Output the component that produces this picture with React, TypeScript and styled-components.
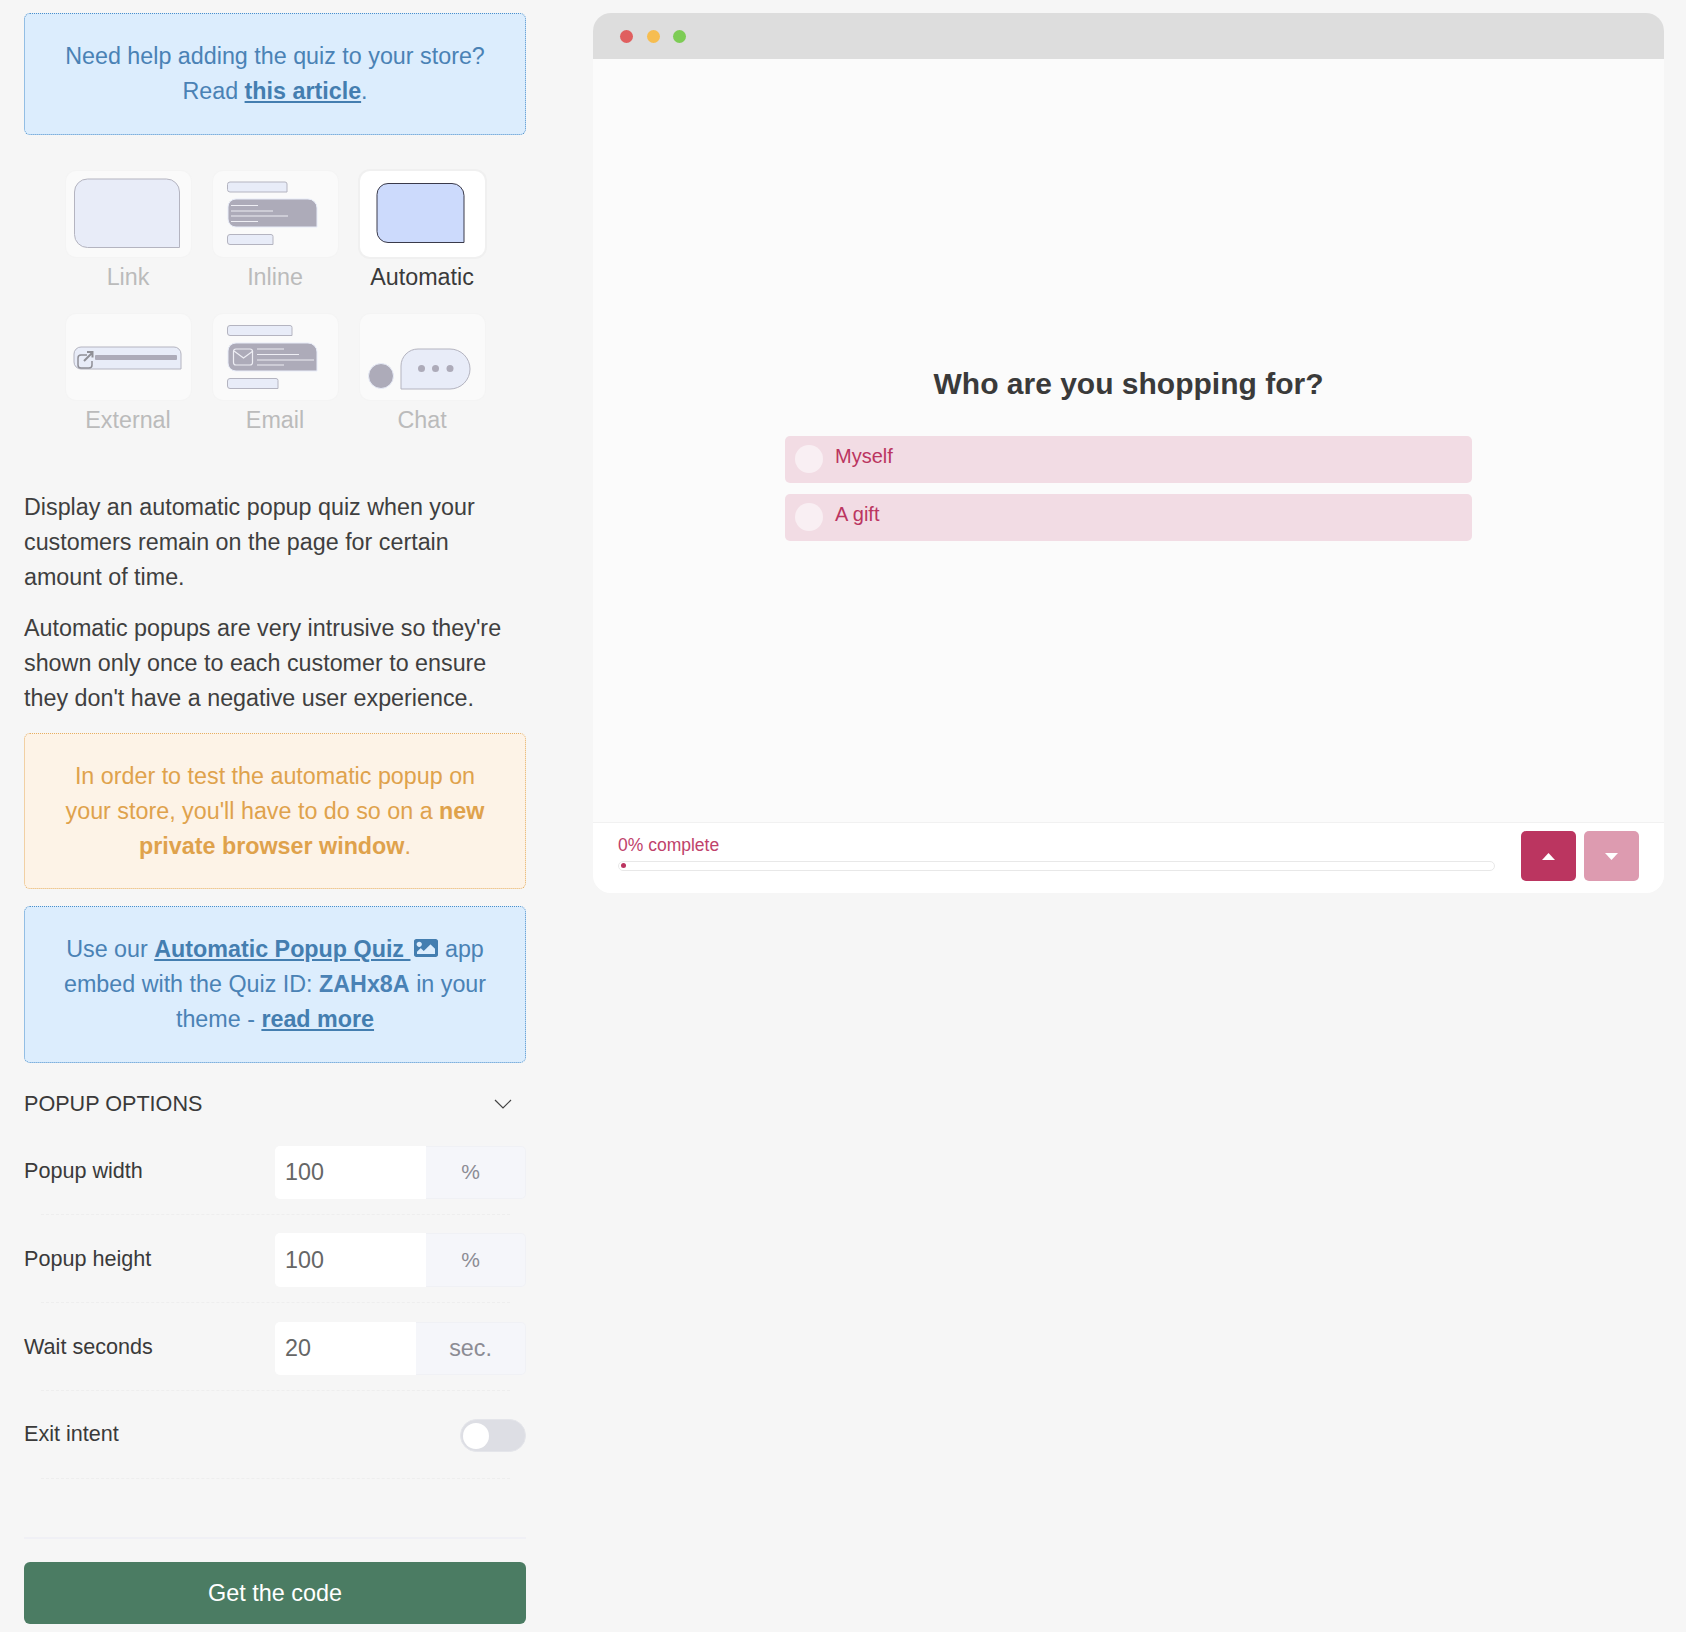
import styled, { createGlobalStyle } from "styled-components";
import { FaImage } from "react-icons/fa";

const GlobalStyle = createGlobalStyle`
    html, body {
        margin: 0;
        padding: 0;
        background: #f6f6f6;
    }

    * {
        box-sizing: border-box;
    }
`

const Page = styled.div`
    width: 1686px;
    height: 1632px;
    padding: 13px 22px 0 24px;
    display: flex;
    gap: 67px;
    align-items: flex-start;
    font-family: "Liberation Sans", Arial, sans-serif;
    color: #3a3a3a;
    overflow: hidden;
`

const Sidebar = styled.div`
    width: 502px;
    flex-shrink: 0;
`

const Notice = styled.div<{ $tone: "info" | "warn"; $top?: number; $pad?: number }>`
    margin-top: ${props => props.$top ?? 0}px;
    padding: ${props => props.$pad ?? 24.5}px 30px;
    border-radius: 6px;
    border: 1px dotted ${props => props.$tone === "info" ? "#4a8fcb" : "#e6ae62"};
    background: ${props => props.$tone === "info" ? "#dcedfd" : "#fdf3e7"};
    color: ${props => props.$tone === "info" ? "#4a82b5" : "#dfa24c"};
    font-size: 23.3px;
    line-height: 35px;
    text-align: center;

    a {
        color: #447eb0;
        font-weight: 700;
        text-decoration: underline;
    }

    svg {
        vertical-align: -3px;
        margin-left: 4px;
    }
`

const TypeGrid = styled.div`
    margin-top: 36px;
    display: grid;
    grid-template-columns: repeat(3, 125px);
    justify-content: center;
    column-gap: 22px;
    row-gap: 19px;
`

const TypeItem = styled.div`
    display: flex;
    flex-direction: column;
    align-items: center;
`

const TypeCard = styled.div<{ $active?: boolean }>`
    width: 125px;
    height: 86px;
    border-radius: 10px;
    background: ${props => props.$active ? "#ffffff" : "#fafafa"};
    box-shadow: 0 0 0 ${props => props.$active ? "2px #f0f0f0" : "1px #f4f4f4"};

    svg {
        display: block;
    }
`

const TypeLabel = styled.div<{ $active?: boolean }>`
    margin-top: 3px;
    font-size: 23.3px;
    line-height: 35px;
    color: ${props => props.$active ? "#3a3a3a" : "#bbbbbb"};
`

const Copy = styled.p<{ $top: number }>`
    margin: ${props => props.$top}px 0 0;
    font-size: 23.3px;
    line-height: 35px;
    color: #3f3f3f;
`

const OptionsHeader = styled.div`
    margin: 24px 0 6px;
    height: 34px;
    padding-right: 14px;
    display: flex;
    align-items: center;
    justify-content: space-between;
    font-size: 21.6px;
`

const OptionRow = styled.div<{ $top?: number }>`
    height: 87px;
    padding-top: ${props => props.$top ?? 3}px;
    display: flex;
    align-items: center;
    justify-content: space-between;
`

const OptionLabel = styled.div`
    font-size: 21.6px;
    padding-bottom: 3px;
`

const InputGroup = styled.div<{ $height: number }>`
    width: 251px;
    height: ${props => props.$height}px;
    display: flex;
`

const NumberInput = styled.input<{ $width: number; $pad: number }>`
    width: ${props => props.$width}px;
    height: 100%;
    padding: 0 0 0 ${props => props.$pad}px;
    border: 0;
    outline: 0;
    border-radius: 5px 0 0 5px;
    background: #ffffff;
    color: #666666;
    font: 23.3px "Liberation Sans", Arial, sans-serif;
`

const Addon = styled.div<{ $compact: boolean }>`
    flex: 1;
    display: flex;
    align-items: center;
    justify-content: center;
    padding-right: ${props => props.$compact ? 10 : 0}px;
    border: 1px solid #f0f1f5;
    border-left: 0;
    border-radius: 0 5px 5px 0;
    background: #f5f6fa;
    color: #8c8c94;
    font-size: ${props => props.$compact ? 21 : 23.3}px;
`

const Divider = styled.div`
    margin: 0 16px 0 17px;
    border-top: 1px dashed #eeeeee;
`

const Toggle = styled.div`
    width: 66px;
    height: 33px;
    padding: 3px 0 0 2px;
    border-radius: 17px;
    background: #dddee4;
    border: 1px solid #e4e5ea;
`

const Knob = styled.div`
    width: 26px;
    height: 26px;
    border-radius: 50%;
    background: #ffffff;
`

const Rule = styled.div`
    margin-top: 58px;
    border-top: 2px solid #f0f0f5;
`

const CodeButton = styled.button`
    display: block;
    width: 100%;
    height: 62px;
    margin-top: 23px;
    border: 0;
    border-radius: 6px;
    background: #4b7c63;
    color: #ffffff;
    font: 23.4px "Liberation Sans", Arial, sans-serif;
`

const BrowserWindow = styled.div`
    width: 1071px;
    height: 880px;
    display: flex;
    flex-direction: column;
    border-radius: 18px;
    overflow: hidden;
    background: #fbfbfb;
`

const TitleBar = styled.div`
    height: 46px;
    padding: 0 0 0 27px;
    display: flex;
    align-items: center;
    gap: 13.5px;
    background: #dddddd;
`

const Dot = styled.span<{ $color: string }>`
    width: 13px;
    height: 13px;
    border-radius: 50%;
    background: ${props => props.$color};
`

const QuizBody = styled.div`
    flex: 1;
    display: flex;
    flex-direction: column;
    align-items: center;
    padding-top: 303px;
`

const Question = styled.h2`
    margin: 0 0 29.5px;
    font-size: 30px;
    line-height: 44px;
    font-weight: 700;
    color: #3a3a3a;
`

const Answer = styled.div`
    width: 687px;
    height: 47px;
    margin-bottom: 11px;
    padding-left: 10px;
    display: flex;
    align-items: center;
    gap: 12px;
    border-radius: 5px;
    background: #f2dce4;
    color: #bb3560;
    font-size: 20px;
`

const Radio = styled.span`
    width: 28px;
    height: 28px;
    border-radius: 50%;
    background: #f9eff3;
`

const AnswerText = styled.span`
    padding-bottom: 6px;
`

const QuizFooter = styled.div`
    height: 71px;
    padding: 0 25px;
    display: flex;
    align-items: flex-start;
    background: #ffffff;
    border-top: 1px solid #f1f1f1;
`

const ProgressBox = styled.div`
    flex: 1;
    padding-top: 12px;
    margin-right: 26px;
`

const ProgressText = styled.div`
    font-size: 17.5px;
    line-height: 20px;
    color: #c0426b;
`

const ProgressTrack = styled.div`
    height: 10px;
    margin-top: 6px;
    padding: 1px 0 0 2px;
    border: 1px solid #e8e8e8;
    border-radius: 5px;
`

const ProgressDot = styled.div`
    width: 5px;
    height: 5px;
    border-radius: 50%;
    background: #bb3560;
`

const NavButton = styled.button<{ $muted?: boolean }>`
    width: 55px;
    height: 50px;
    margin: 8px 0 0 ${props => props.$muted ? 8 : 0}px;
    padding: 0;
    display: flex;
    align-items: center;
    justify-content: center;
    border: 0;
    border-radius: 5px;
    background: ${props => props.$muted ? "#dd9bb0" : "#bb3560"};
`

const bar = { fill: "#e8ecf8", stroke: "#b4b4c0", strokeWidth: 1 }
const lines = { stroke: "#eeeef4", strokeWidth: 1.2 }

function Thumb({ children }: { children: React.ReactNode }) {
    return <svg width="125" height="86" viewBox="0 0 125 86">{children}</svg>
}

const LinkThumb = () => (
    <Thumb>
        <path d="M21.500 8h79a13 13 0 0 1 13 13v55.500H21.500a13 13 0 0 1-13-13V21a13 13 0 0 1 13-13z" {...bar} />
    </Thumb>
)

const InlineThumb = () => (
    <Thumb>
        <path d="M17 11h55a2 2 0 0 1 2 2v8H17a2.500 2.500 0 0 1-2.500-2.500v-5A2.500 2.500 0 0 1 17 11z" {...bar} />
        <path d="M23 28h72a9 9 0 0 1 9 9v19H23a8 8 0 0 1-8-8V36a8 8 0 0 1 8-8z" fill="#adabb9" stroke="#e8ecf8" />
        <path d="M18 34.500h27M18 40h42M18 45h57M18 50.500h27" {...lines} />
        <path d="M17 63.500h41a2 2 0 0 1 2 2v8H17a2.500 2.500 0 0 1-2.500-2.500v-5a2.500 2.500 0 0 1 2.500-2.500z" {...bar} />
    </Thumb>
)

const AutomaticThumb = () => (
    <Thumb>
        <path d="M28 12.500h64a12 12 0 0 1 12 12V71.500H28a11 11 0 0 1-11-11V23.500a11 11 0 0 1 11-11z" fill="#ccdafc" stroke="#3a3a4a" />
    </Thumb>
)

const ExternalThumb = () => (
    <Thumb>
        <path d="M15 33h93a7 7 0 0 1 7 7v15H15a7 7 0 0 1-7-7v-8a7 7 0 0 1 7-7z" {...bar} />
        <path d="M21 41h-6a3 3 0 0 0-3 3v7a3 3 0 0 0 3 3h8a3 3 0 0 0 3-3v-4" fill="none" stroke="#8f8f96" strokeWidth="1.500" />
        <path d="M18 47l8-8M21 38h5.500v5.500" fill="none" stroke="#8f8f96" strokeWidth="2" />
        <rect x="29" y="41" width="82" height="5" rx="1" fill="#adabb9" />
    </Thumb>
)

const EmailThumb = () => (
    <Thumb>
        <path d="M17 11.500h60a2 2 0 0 1 2 2v8H17a2.500 2.500 0 0 1-2.500-2.500v-5a2.500 2.500 0 0 1 2.500-2.500z" {...bar} />
        <path d="M23 29h72a9 9 0 0 1 9 9v19H23a8 8 0 0 1-8-8V37a8 8 0 0 1 8-8z" fill="#adabb9" stroke="#e8ecf8" />
        <rect x="20.500" y="35" width="19" height="16" rx="2.500" fill="none" stroke="#eeeef4" strokeWidth="1.200" />
        <path d="M21 37l9.500 7 9.500-7" fill="none" stroke="#eeeef4" strokeWidth="1.200" />
        <path d="M44 35h27M44 40.500h42M44 46h57M44 51h27" {...lines} />
        <path d="M17 64.500h46a2 2 0 0 1 2 2v8H17a2.500 2.500 0 0 1-2.500-2.500v-5a2.500 2.500 0 0 1 2.500-2.500z" {...bar} />
    </Thumb>
)

const ChatThumb = () => (
    <Thumb>
        <circle cx="21" cy="62" r="12.500" fill="#adabb9" stroke="#e8ecf8" />
        <path d="M58 35h32a20 20 0 0 1 0 40H41V52a17 17 0 0 1 17-17z" {...bar} />
        <circle cx="61.500" cy="54.500" r="3.500" fill="#adabb9" />
        <circle cx="75.500" cy="54.500" r="3.500" fill="#adabb9" />
        <circle cx="90" cy="54.500" r="3.500" fill="#adabb9" />
    </Thumb>
)

const types = [
    { label: "Link", thumb: <LinkThumb /> },
    { label: "Inline", thumb: <InlineThumb /> },
    { label: "Automatic", thumb: <AutomaticThumb />, active: true },
    { label: "External", thumb: <ExternalThumb /> },
    { label: "Email", thumb: <EmailThumb /> },
    { label: "Chat", thumb: <ChatThumb /> },
]

const fields = [
    { label: "Popup width", value: "100", unit: "%", width: 151, pad: 10, height: 53 },
    { label: "Popup height", value: "100", unit: "%", width: 151, pad: 10, height: 54 },
    { label: "Wait seconds", value: "20", unit: "sec.", width: 141, pad: 10, height: 53 },
]

export default function App() {
    return (
        <Page>
            <GlobalStyle />
            <Sidebar>
                <Notice $tone="info" $pad={25}>
                    Need help adding the quiz to your store?<br />
                    Read <a href="#">this article</a>.
                </Notice>

                <TypeGrid>
                    {types.map(t => (
                        <TypeItem key={t.label}>
                            <TypeCard $active={t.active}>{t.thumb}</TypeCard>
                            <TypeLabel $active={t.active}>{t.label}</TypeLabel>
                        </TypeItem>
                    ))}
                </TypeGrid>

                <Copy $top={51.5}>
                    Display an automatic popup quiz when your customers remain on the page for certain amount of time.
                </Copy>
                <Copy $top={16}>
                    Automatic popups are very intrusive so they're shown only once to each customer to ensure they don't have a negative user experience.
                </Copy>

                <Notice $tone="warn" $top={17.5}>
                    In order to test the automatic popup on your store, you'll have to do so on a <b>new private browser window</b>.
                </Notice>

                <Notice $tone="info" $top={17} $pad={25}>
                    Use our <a href="#">Automatic Popup Quiz <FaImage size={24} /></a> app embed with the Quiz ID: <b>ZAHx8A</b> in your theme - <a href="#">read more</a>
                </Notice>

                <OptionsHeader>
                    POPUP OPTIONS
                    <svg width="18" height="10" viewBox="0 0 18 10">
                        <path d="M1 1l8 8 8-8" fill="none" stroke="#444" strokeWidth="1.200" />
                    </svg>
                </OptionsHeader>

                {fields.map(f => (
                    <div key={f.label}>
                        <OptionRow>
                            <OptionLabel>{f.label}</OptionLabel>
                            <InputGroup $height={f.height}>
                                <NumberInput $width={f.width} $pad={f.pad} defaultValue={f.value} />
                                <Addon $compact={f.unit === "%"}>{f.unit}</Addon>
                            </InputGroup>
                        </OptionRow>
                        <Divider />
                    </div>
                ))}

                <OptionRow $top={1}>
                    <OptionLabel>Exit intent</OptionLabel>
                    <Toggle><Knob /></Toggle>
                </OptionRow>
                <Divider />

                <Rule />
                <CodeButton>Get the code</CodeButton>
            </Sidebar>

            <BrowserWindow>
                <TitleBar>
                    <Dot $color="#e05f5f" />
                    <Dot $color="#f6bd50" />
                    <Dot $color="#7dcc55" />
                </TitleBar>
                <QuizBody>
                    <Question>Who are you shopping for?</Question>
                    <Answer><Radio /><AnswerText>Myself</AnswerText></Answer>
                    <Answer><Radio /><AnswerText>A gift</AnswerText></Answer>
                </QuizBody>
                <QuizFooter>
                    <ProgressBox>
                        <ProgressText>0% complete</ProgressText>
                        <ProgressTrack><ProgressDot /></ProgressTrack>
                    </ProgressBox>
                    <NavButton>
                        <svg width="13" height="7" viewBox="0 0 13 7"><path d="M6.500 0L13 7H0z" fill="#fff" /></svg>
                    </NavButton>
                    <NavButton $muted>
                        <svg width="13" height="7" viewBox="0 0 13 7"><path d="M0 0h13L6.500 7z" fill="#fff" /></svg>
                    </NavButton>
                </QuizFooter>
            </BrowserWindow>
        </Page>
    )
}
